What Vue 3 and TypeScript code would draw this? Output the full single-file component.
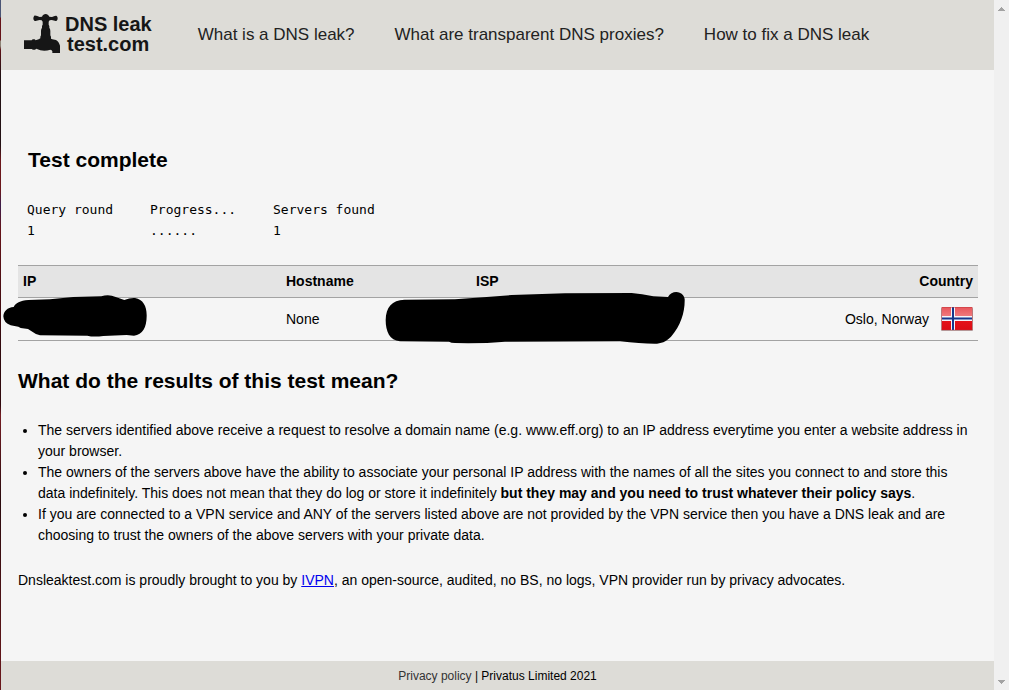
<script setup lang="ts">
interface Stat { label: string; value: string }

const links: string[] = [
  'What is a DNS leak?',
  'What are transparent DNS proxies?',
  'How to fix a DNS leak',
]
const stats: Stat[] = [
  { label: 'Query round', value: '1' },
  { label: 'Progress...', value: '......' },
  { label: 'Servers found', value: '1' },
]
</script>

<template>
  <div class="window">
    <div class="edge"></div>
    <div class="page">
      <header class="top">
        <a class="logo" href="#">
          <svg width="36" height="39" viewBox="12 12 108 117" aria-hidden="true">
            <path d="M43 17C49 16 53 20 59 21L66 20C68 15 72 12 77 12S85 15 88 20L95 21C101 20 106 16 110 18Q113 20 113 25T110 32C106 34 101 31 95 30L89 31L86 35V44L88 48V53Q91 57 91 63V76L93 80V86L97 88L108 90C116 94 121 105 121 116V129H97V124Q96 119 91 119Q77 124 61 121L49 116L45 119H38L36 117H12V91H35L38 88H44L47 91L56 88L61 85V80L63 76V63Q63 57 66 53V48L68 44V35L65 31L59 30C53 31 48 34 43 32Q40 30 40 25T43 17Z" fill="#161616" />
          </svg>
          <span class="wordmark"><span>DNS leak</span><span class="second">test.com</span></span>
        </a>
        <nav class="nav">
          <a v-for="link in links" :key="link" href="#">{{ link }}</a>
        </nav>
      </header>

      <main class="content">
        <h2 class="done">Test complete</h2>
        <table class="stats">
          <thead>
            <tr><th v-for="s in stats" :key="s.label" scope="col">{{ s.label }}</th></tr>
          </thead>
          <tbody>
            <tr><td v-for="s in stats" :key="s.label">{{ s.value }}</td></tr>
          </tbody>
        </table>

        <table class="results">
          <thead>
            <tr>
              <th class="ip" scope="col">IP</th>
              <th class="host" scope="col">Hostname</th>
              <th scope="col">ISP</th>
              <th class="country" scope="col">Country</th>
            </tr>
          </thead>
          <tbody>
            <tr>
              <td>
                <svg class="mark mark-ip" width="144" height="42" viewBox="9 30 432 126" aria-hidden="true">
                  <path d="M10 94C11 78 22 68 41 66C47 54 60 47 85 45L150 43L220 36L304 34Q326 26 347 36L373 45Q390 38 405 39C430 43 441 65 440 94C440 126 428 150 402 152L380 150L310 153Q280 157 262 152L120 151Q110 150 97 140L84 132L62 129L55 125L32 121Q11 114 10 94Z" />
                </svg>
              </td>
              <td>None</td>
              <td>
                <svg class="mark mark-isp" width="300" height="53" viewBox="30 18 900 159" aria-hidden="true">
                  <path d="M32 105C33 65 51 46 88 44L240 43L325 37L410 30L570 25L770 24Q800 27 835 34L879 36C886 22 902 19 914 23Q927 28 929 42C930 80 918 121 888 155C872 170 859 176 839 176Q795 176 735 169L390 170Q320 176 240 174Q228 174 222 170L75 169C44 166 32 140 32 105Z" />
                </svg>
              </td>
              <td class="country">
                <span class="place">
                  Oslo, Norway
                  <svg class="flag" width="32" height="24" viewBox="0 0 32 24" role="img" aria-label="Norway">
                    <defs>
                      <linearGradient id="gloss" x1="0" y1="0" x2="0" y2="1">
                        <stop offset="0" stop-color="#e8545a" /><stop offset=".48" stop-color="#f18184" />
                        <stop offset=".5" stop-color="#e5151b" /><stop offset="1" stop-color="#dc0c14" />
                      </linearGradient>
                    </defs>
                    <rect x="0" y="1" width="32" height="23" rx="1" fill="#b5b5b5" />
                    <rect x="1" y="0" width="30" height="23" fill="url(#gloss)" />
                    <path d="M10 0h4v23h-4zM1 9h30v5H1z" fill="#f4f4fa" />
                    <path d="M11 0h2v23h-2zM1 10.5h30v2H1z" fill="#14368b" />
                    <path d="M.5.5h31v22.5H.5z" fill="none" stroke="#bd3438" stroke-opacity=".45" />
                  </svg>
                </span>
              </td>
            </tr>
          </tbody>
        </table>

        <h2>What do the results of this test mean?</h2>
        <ul>
          <li>The servers identified above receive a request to resolve a domain name (e.g. www.eff.org) to an IP address everytime you enter a website address in your browser.</li>
          <li>The owners of the servers above have the ability to associate your personal IP address with the names of all the sites you connect to and store this data indefinitely. This does not mean that they do log or store it indefinitely <b>but they may and you need to trust whatever their policy says</b>.</li>
          <li>If you are connected to a VPN service and ANY of the servers listed above are not provided by the VPN service then you have a DNS leak and are choosing to trust the owners of the above servers with your private data.</li>
        </ul>
        <p>Dnsleaktest.com is proudly brought to you by <a href="#">IVPN</a>, an open-source, audited, no BS, no logs, VPN provider run by privacy advocates.</p>
      </main>

      <footer class="bottom"><a href="#">Privacy policy</a> | Privatus Limited 2021</footer>
    </div>
    <div class="scroll" aria-hidden="true">
      <svg width="7" height="4" viewBox="0 0 7 4"><path d="M3 0h1v1h1v1h1v1h1v1H0V3h1V2h1V1h1z" /></svg>
      <svg width="7" height="4" viewBox="0 0 7 4"><path d="M0 0h7v1H6v1H5v1H4v1H3V3H2V2H1V1H0z" /></svg>
    </div>
  </div>
</template>

<style>
body { margin: 0; background: #f5f5f5; }
</style>

<style scoped>
.window {
  display: grid;
  grid-template-columns: 1px minmax(0, 1fr) 15px;
  min-height: 100vh;
  font: 14px/21px "Liberation Sans", Arial, sans-serif;
  color: #000;
}
.edge { background: linear-gradient(#4a5575 0 17px, #651218 18px 40px, #8c8274 41px 46px, #5c1015 50px, #221013 75px 145px, #6b171b 160px 190px, #3c1d4b 205px, #651218 230px, #30090d 350px 405px, #741c22 415px, #2a0a0d 500px, #6b171b 100%); }
.page { display: flex; flex-direction: column; background: #f5f5f5; }
.top {
  display: flex;
  align-items: flex-start;
  box-sizing: border-box;
  min-height: 70px;
  padding: 14px 23px;
  background: #dddcd7;
}
.logo { display: flex; gap: 5px; color: #161616; text-decoration: none; }
.wordmark { display: flex; flex-direction: column; font-size: 20px; font-weight: bold; line-height: 20px; }
.second { padding-left: 2px; }
.nav { display: flex; gap: 40px; margin-left: 46px; padding-top: 10px; font-size: 17px; }
.nav a { color: #222; text-decoration: none; }
.content { flex: 1; padding: 74px 16px 0 17px; }
h2 { margin: 0; font-size: 21px; line-height: 32px; }
.done { padding-left: 10px; }
.stats {
  margin: 23px 0 0 9px;
  border-collapse: collapse;
  font: 13px/21px "DejaVu Sans Mono", monospace;
}
.stats th, .stats td { padding: 0; width: 123px; font-weight: normal; text-align: left; white-space: nowrap; }
.results { width: 100%; margin-top: 24px; border-collapse: collapse; table-layout: fixed; }
.results tr { border-top: 1px solid #a3a3a3; border-bottom: 1px solid #a3a3a3; }
.results thead { background: #e4e4e4; }
.results th { height: 31px; padding: 0 5px; text-align: left; }
.results td { position: relative; height: 42px; padding: 0 5px; }
.ip { width: 253px; }
.host { width: 180px; }
.results .country { text-align: right; }
.place { display: flex; justify-content: flex-end; align-items: center; gap: 12px; }
.mark { position: absolute; }
.mark-ip { left: -15px; top: -3px; }
.mark-isp { left: -86px; top: -7px; }
.results + h2 { margin-top: 24px; }
ul { margin: 23px 0 0; padding-left: 20px; }
p { margin: 24px 0 0; }
p a { color: #00e; }
.bottom { padding: 5px 0 3px; background: #dddcd7; font-size: 12px; text-align: center; }
.bottom a { color: #333; text-decoration: none; }
.scroll { display: flex; flex-direction: column; justify-content: space-between; align-items: center; padding: 7px 0 6px; background: #f0f0f0; fill: #a3a3a3; }
</style>
